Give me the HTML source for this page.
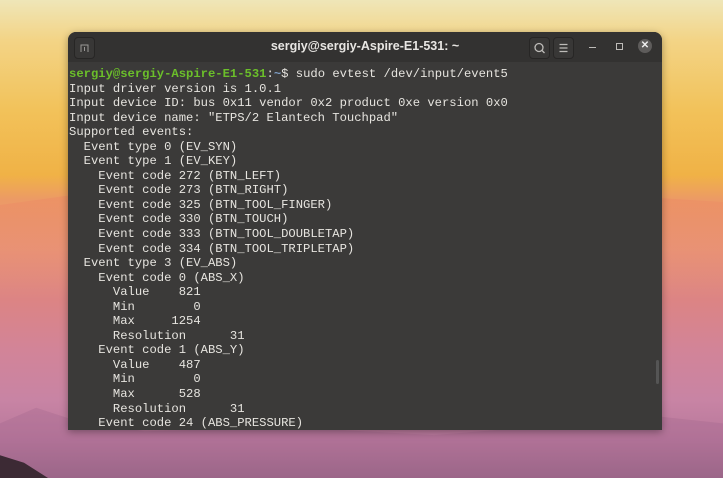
<!DOCTYPE html>
<html><head><meta charset="utf-8"><style>
html,body{margin:0;padding:0}
body{width:723px;height:478px;overflow:hidden;position:relative;
background:linear-gradient(180deg,#efe6b8 0px,#f3d486 40px,#f2c25a 110px,#f0b246 175px,#ec9a66 200px,#e89478 250px,#dc8484 300px,#d28498 350px,#c884a4 400px,#b8789c 440px,#9a6888 478px);}
.m1{position:absolute;left:0;top:190px;width:723px;height:100px;background:linear-gradient(180deg,rgba(235,130,100,.35),rgba(225,125,110,0));clip-path:polygon(0 15%,10% 5%,25% 12%,40% 0,60% 10%,80% 3%,100% 12%,100% 100%,0 100%)}
.m2{position:absolute;left:0;top:400px;width:723px;height:78px;background:rgba(160,100,140,.3);clip-path:polygon(0 30%,5% 10%,10% 25%,20% 40%,40% 35%,60% 45%,80% 30%,90% 20%,100% 30%,100% 100%,0 100%)}
.m3{position:absolute;left:0;top:440px;width:80px;height:38px;background:#3c2a34;clip-path:polygon(0 40%,30% 60%,60% 100%,0 100%)}
.win{position:absolute;left:68px;top:32px;width:594px;height:398px;background:#3b3a39;border-radius:8px 8px 0 0;box-shadow:0 2px 8px rgba(0,0,0,.35);overflow:hidden}
.tb{height:30px;background:#333231;position:relative}
.title{position:absolute;left:0;right:0;top:7px;text-align:center;font:bold 12.5px "Liberation Sans",sans-serif;color:#e8e6e3}
.btn{position:absolute;top:5px;width:19px;height:20px;border:1px solid #272625;border-radius:4px;background:#383736}
.term{position:absolute;left:1px;top:35px;font:12.2px/14.55px "Liberation Mono",monospace;color:#e6e4df;white-space:pre;margin:0}
.g{color:#6bbf2a;font-weight:bold}.b{color:#7e9ec6;font-weight:bold}
</style></head><body>
<div class="m1"></div><div class="m2"></div><div class="m3"></div>
<div class="win">
<div class="tb">
<div class="btn" style="left:6px"><svg width="19" height="20"><path d="M6 14V7h7v7M9.5 9v4" stroke="#9a9896" fill="none" stroke-width="1"/></svg></div>
<div class="title">sergiy@sergiy-Aspire-E1-531: ~</div>
<div class="btn" style="left:461px"><svg width="19" height="20"><circle cx="9" cy="9.5" r="4" stroke="#bdbbb8" fill="none" stroke-width="1.3"/><path d="M12 12.5l2.5 2.5" stroke="#bdbbb8" stroke-width="1.3"/></svg></div>
<div class="btn" style="left:485px"><svg width="19" height="20"><path d="M5.5 6.5h8M5.5 10h8M5.5 13.5h8" stroke="#bdbbb8" stroke-width="1.2"/></svg></div>
<div style="position:absolute;left:521px;top:15px;width:7px;height:1px;background:#bdbbb8"></div>
<div style="position:absolute;left:548px;top:11px;width:5px;height:5px;border:1px solid #bdbbb8"></div>
<div style="position:absolute;left:570px;top:7px;width:14px;height:14px;border-radius:50%;background:#5e5c5b;color:#eee;font:bold 10px/14px 'Liberation Sans',sans-serif;text-align:center">✕</div>
</div>
<pre class="term"><span class="g">sergiy@sergiy-Aspire-E1-531</span>:<span class="b">~</span>$ sudo evtest /dev/input/event5
Input driver version is 1.0.1
Input device ID: bus 0x11 vendor 0x2 product 0xe version 0x0
Input device name: "ETPS/2 Elantech Touchpad"
Supported events:
  Event type 0 (EV_SYN)
  Event type 1 (EV_KEY)
    Event code 272 (BTN_LEFT)
    Event code 273 (BTN_RIGHT)
    Event code 325 (BTN_TOOL_FINGER)
    Event code 330 (BTN_TOUCH)
    Event code 333 (BTN_TOOL_DOUBLETAP)
    Event code 334 (BTN_TOOL_TRIPLETAP)
  Event type 3 (EV_ABS)
    Event code 0 (ABS_X)
      Value    821
      Min        0
      Max     1254
      Resolution      31
    Event code 1 (ABS_Y)
      Value    487
      Min        0
      Max      528
      Resolution      31
    Event code 24 (ABS_PRESSURE)</pre>
<div style="position:absolute;left:588px;top:328px;width:3px;height:24px;background:#555;border-radius:2px"></div>
</div>
</body></html>
